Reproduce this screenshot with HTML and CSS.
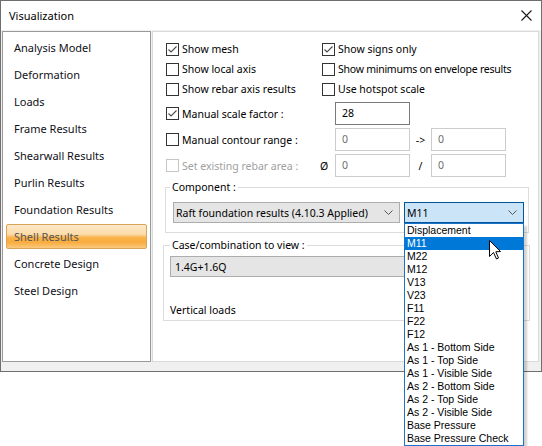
FILE: index.html
```html
<!DOCTYPE html>
<html>
<head>
<meta charset="utf-8">
<link rel="stylesheet" href="styles.css">
</head>
<body>
<div class="window">
  <div class="titlebar">
    <span class="title">Visualization</span>
    <svg class="close" width="11" height="11" viewBox="0 0 11 11"><path d="M0.5 0.5 L10.5 10.5 M10.5 0.5 L0.5 10.5" stroke="#1a1a1a" stroke-width="1.1" fill="none"/></svg>
  </div>
  <div class="body">
    <ul class="nav">
      <li>Analysis Model</li>
      <li>Deformation</li>
      <li>Loads</li>
      <li>Frame Results</li>
      <li>Shearwall Results</li>
      <li>Purlin Results</li>
      <li>Foundation Results</li>
      <li class="active">Shell Results</li>
      <li>Concrete Design</li>
      <li>Steel Design</li>
    </ul>
    <div class="panel">
      <div class="opts">
        <div class="row r-check">
          <label class="cb col1"><span class="box"><svg width="11" height="11" viewBox="0 0 11 11"><path d="M1.5 5.5 L4 8 L9.5 2.5" stroke="#4a4a4a" stroke-width="1.1" fill="none"/></svg></span>Show mesh</label>
          <label class="cb"><span class="box"><svg width="11" height="11" viewBox="0 0 11 11"><path d="M1.5 5.5 L4 8 L9.5 2.5" stroke="#4a4a4a" stroke-width="1.1" fill="none"/></svg></span>Show signs only</label>
        </div>
        <div class="row r-check">
          <label class="cb col1"><span class="box"></span>Show local axis</label>
          <label class="cb"><span class="box"></span><span class="tight">Show minimums on envelope results</span></label>
        </div>
        <div class="row r-check">
          <label class="cb col1"><span class="box"></span>Show rebar axis results</label>
          <label class="cb"><span class="box"></span>Use hotspot scale</label>
        </div>
        <div class="row r-input first">
          <label class="cb lab"><span class="box"><svg width="11" height="11" viewBox="0 0 11 11"><path d="M1.5 5.5 L4 8 L9.5 2.5" stroke="#4a4a4a" stroke-width="1.1" fill="none"/></svg></span>Manual scale factor :</label>
          <span class="sym"></span>
          <span class="input">28</span>
        </div>
        <div class="row r-input">
          <label class="cb lab"><span class="box"></span>Manual contour range :</label>
          <span class="sym"></span>
          <span class="input dis">0</span>
          <span class="sep">-&gt;</span>
          <span class="input dis">0</span>
        </div>
        <div class="row r-input disabled">
          <label class="cb lab"><span class="box"></span>Set existing rebar area :</label>
          <span class="sym">Ø</span>
          <span class="input dis">0</span>
          <span class="sep">/</span>
          <span class="input dis">0</span>
        </div>
      </div>
      <fieldset class="group comp">
        <legend>Component :</legend>
        <div class="combos">
          <div class="combo c-type">
            <span>Raft foundation results (4.10.3 Applied)</span>
            <svg class="chev" width="9" height="5" viewBox="0 0 9 5"><path d="M0.5 0.5 L4.5 4.5 L8.5 0.5" stroke="#555" fill="none"/></svg>
          </div>
          <div class="combo c-comp">
            <span>M11</span>
            <svg class="chev" width="9" height="5" viewBox="0 0 9 5"><path d="M0.5 0.5 L4.5 4.5 L8.5 0.5" stroke="#555" fill="none"/></svg>
          </div>
        </div>
      </fieldset>
      <fieldset class="group case">
        <legend>Case/combination to view :</legend>
        <div class="combo c-case"><span>1.4G+1.6Q</span></div>
        <div class="note">Vertical loads</div>
      </fieldset>
    </div>
  </div>
</div>
<ul class="dropdown">
  <li>Displacement</li>
  <li class="sel">M11</li>
  <li>M22</li>
  <li>M12</li>
  <li>V13</li>
  <li>V23</li>
  <li>F11</li>
  <li>F22</li>
  <li>F12</li>
  <li>As 1 - Bottom Side</li>
  <li>As 1 - Top Side</li>
  <li>As 1 - Visible Side</li>
  <li>As 2 - Bottom Side</li>
  <li>As 2 - Top Side</li>
  <li>As 2 - Visible Side</li>
  <li>Base Pressure</li>
  <li>Base Pressure Check</li>
</ul>
<svg class="cursor" width="13" height="20" viewBox="0 0 13 20"><path d="M0.5 0.5 L0.5 16.5 L4.5 12.5 L7.5 19 L9.5 18 L6.8 11.8 L11.5 11.5 Z" fill="#fff" stroke="#000" stroke-width="1"/></svg>
</body>
</html>
```

FILE: styles.css
```css
body {
  margin: 0;
  background: #fff;
  font-family: "Noto Sans", sans-serif;
  font-size: 11px;
  color: #000;
}

.window {
  width: 542px;
  height: 372px;
  box-sizing: border-box;
  border: 1px solid #6f6f6f;
  display: flex;
  flex-direction: column;
  background: #f0f0f0;
}

.titlebar {
  height: 29px;
  flex: none;
  background: #fff;
  display: flex;
  align-items: center;
  justify-content: space-between;
  padding: 0 9px 0 8px;
}

.title {
  font-size: 11px;
}

.body {
  flex: 1;
  display: flex;
  gap: 1px;
  padding: 1px 2px 9px 1px;
  min-height: 0;
}

.nav {
  width: 149px;
  flex: none;
  box-sizing: border-box;
  margin: 0;
  padding: 3px 3px 0 3px;
  list-style: none;
  background: #fff;
  border: 1px solid #9a9a9a;
}

.nav li {
  height: 25px;
  box-sizing: border-box;
  border: 1px solid transparent;
  border-radius: 2px;
  padding-left: 7px;
  line-height: 23px;
  margin-bottom: 2px;
  color: #101018;
}

.nav li.active {
  border-color: #d8a45a;
  color: #555;
  background: linear-gradient(#fde8c8 0%, #fcdcaa 40%, #f9b24a 55%, #f8ac3e 75%, #fbc97f 100%);
}

.panel {
  flex: 1;
  box-sizing: border-box;
  background: #fff;
  border: 1px solid #dadada;
  padding-top: 6px;
  display: flex;
  flex-direction: column;
  font-size: 10.5px;
}

.opts {
  padding-left: 13px;
}

.row {
  display: flex;
  align-items: center;
}

.r-check {
  height: 20px;
  box-sizing: border-box;
  padding-top: 2px;
}

.tight {
  letter-spacing: -0.25px;
}

.r-input {
  height: 23px;
  margin-top: 3px;
}

.r-input.first {
  margin-top: 4px;
}

.cb {
  display: flex;
  align-items: center;
  gap: 3px;
  white-space: nowrap;
}

.col1 {
  width: 156px;
}

.lab {
  width: 150px;
}

.box {
  width: 13px;
  height: 13px;
  box-sizing: border-box;
  border: 1px solid #333;
  background: #fff;
  display: inline-flex;
  flex: none;
}

.disabled .box {
  border-color: #c6c6c6;
}

.disabled .cb {
  color: #a0a0a0;
}

.sym {
  width: 19px;
  padding-left: 4px;
  box-sizing: border-box;
}

.input {
  width: 75px;
  height: 23px;
  box-sizing: border-box;
  border: 1px solid #7a7a7a;
  padding-left: 6px;
  line-height: 21px;
}

.input.dis {
  border-color: #cccccc;
  color: #6d6d6d;
}

.sep {
  width: 21px;
  text-align: center;
}

.group {
  border: 1px solid #dcdcdc;
  margin: 0;
  min-width: 0;
}

.group legend {
  padding: 0 2px;
  line-height: 16px;
}

.comp {
  margin: 2px 9px 0 12px;
  padding: 7px 4px 9px 7px;
}

.comp legend {
  margin-left: -3px;
}

.combos {
  display: flex;
  gap: 4px;
}

.combo {
  height: 21px;
  box-sizing: border-box;
  border: 1px solid #adadad;
  background: #e5e5e5;
  display: flex;
  align-items: center;
  justify-content: space-between;
  padding: 0 6px 0 2px;
}

.c-type {
  width: 227px;
}

.c-comp {
  flex: 1;
  background: #cce4f7;
  border-color: #005499;
}

.chev {
  flex: none;
}

.case {
  margin: 4px 8px 0 10px;
  padding: 3px 6px 2px 6px;
}

.c-case {
  width: 100%;
  padding-left: 4px;
}

.note {
  margin-top: 25px;
  line-height: 16px;
}

.dropdown {
  position: absolute;
  z-index: 10;
  left: 404px;
  top: 223px;
  width: 120px;
  box-sizing: border-box;
  margin: 0;
  padding: 0;
  list-style: none;
  background: #fff;
  border: 1px solid #1a73c8;
  box-shadow: 3px 3px 2px rgba(0, 0, 0, 0.18);
  font-family: "Liberation Sans", Arial, sans-serif;
  font-size: 10.5px;
}

.dropdown li {
  height: 13px;
  line-height: 13px;
  padding-left: 2px;
  white-space: nowrap;
}

.dropdown li.sel {
  background: #0078d7;
  color: #fff;
}

.cursor {
  position: absolute;
  z-index: 11;
  left: 489px;
  top: 240px;
}
```
